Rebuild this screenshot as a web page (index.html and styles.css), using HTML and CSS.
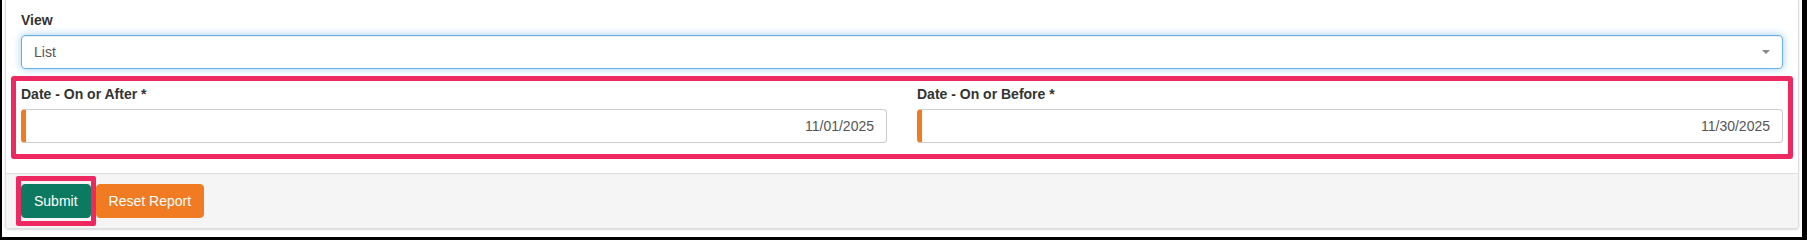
FILE: index.html
```html
<!DOCTYPE html>
<html lang="en">
<head>
  <meta charset="UTF-8" />
  <title>Report</title>
  <link rel="stylesheet" href="styles.css">
</head>
<body>
  <div class="frame">
    <div class="panel">
      <div class="panel-body">

        <!-- view -->
        <div class="form-group">
          <label>View</label>
          <div class="select focused">
            <span>List</span>
            <span class="caret"></span>
          </div>
        </div>

        <!-- date range -->
        <div class="highlight">
          <div class="row">
            <div class="col">
              <label>Date - On or After *</label>
              <input class="form-control date" type="text" value="11/01/2025" readonly>
            </div>
            <div class="col">
              <label>Date - On or Before *</label>
              <input class="form-control date" type="text" value="11/30/2025" readonly>
            </div>
          </div>
        </div>
      </div>

      <div class="panel-footer">
        <span class="highlight-btn">
          <button class="btn btn-submit">Submit</button>
        </span>
        <button class="btn btn-reset">Reset Report</button>
      </div>
    </div>
  </div>
</body>
</html>
```

FILE: styles.css
```css
:root {
  --text: #333;
  --muted: #555;
  --border: #ccc;
  --mark: #ee2860;
  --orange: #f07b22;
  --green: #0b7a60;
}

body {
  margin: 0;
  font-family: "Liberation Sans", Arial, sans-serif;
  font-size: 14px;
  color: var(--text);
  background: #fff;
}

.frame {
  box-sizing: border-box;
  height: 240px;
  border-left: 2px solid #000;
  border-right: 5px solid #000;
  border-bottom: 3px solid #000;
  padding: 0 3px;
}

.panel {
  border: 1px solid #ddd;
  border-top: none;
  border-radius: 0 0 4px 4px;
  box-shadow: 0 1px 2px rgba(0,0,0,0.15);
}

.panel-body {
  padding: 10px 15px 14px;
}

label {
  display: block;
  font-weight: bold;
  line-height: 20px;
  margin-bottom: 5px;
}

.form-group {
  margin-bottom: 15px;
}

.select {
  box-sizing: border-box;
  height: 34px;
  display: flex;
  align-items: center;
  justify-content: space-between;
  padding: 0 12px;
  border: 1px solid var(--border);
  border-radius: 4px;
  color: var(--muted);
  line-height: 20px;
}

.select.focused {
  border-color: #66afe9;
  box-shadow: inset 0 1px 1px rgba(0,0,0,0.075), 0 0 8px rgba(102,175,233,0.6);
}

.caret {
  width: 0;
  height: 0;
  border-style: solid;
  border-width: 4px 4px 0;
  border-color: #888 transparent transparent;
}

.highlight {
  margin: -8px -10px 0;
  padding: 3px 5px 11px;
  border: 5px solid var(--mark);
  border-radius: 3px;
}

.row {
  display: grid;
  grid-template-columns: 1fr 1fr;
  column-gap: 30px;
}

.form-control {
  box-sizing: border-box;
  display: block;
  width: 100%;
  height: 34px;
  padding: 6px 12px;
  font-family: inherit;
  font-size: 14px;
  line-height: 20px;
  color: var(--muted);
  background: #fff;
  border: 1px solid var(--border);
  border-radius: 4px;
  outline: none;
}

.date {
  text-align: right;
  border-left: 5px solid var(--orange);
}

.panel-footer {
  display: flex;
  align-items: center;
  padding: 2px 10px;
  background: #f5f5f5;
  border-top: 1px solid #ddd;
  border-radius: 0 0 3px 3px;
}

.highlight-btn {
  display: flex;
  padding: 3px 0;
  border: 5px solid var(--mark);
  border-radius: 2px;
}

.btn {
  padding: 6px 12px;
  font-family: inherit;
  font-size: 14px;
  line-height: 20px;
  color: #fff;
  border: 1px solid transparent;
  border-radius: 4px;
  cursor: pointer;
}

.btn-submit {
  background-color: var(--green);
  border-color: var(--green);
}

.btn-reset {
  background-color: var(--orange);
  border-color: var(--orange);
}
```
